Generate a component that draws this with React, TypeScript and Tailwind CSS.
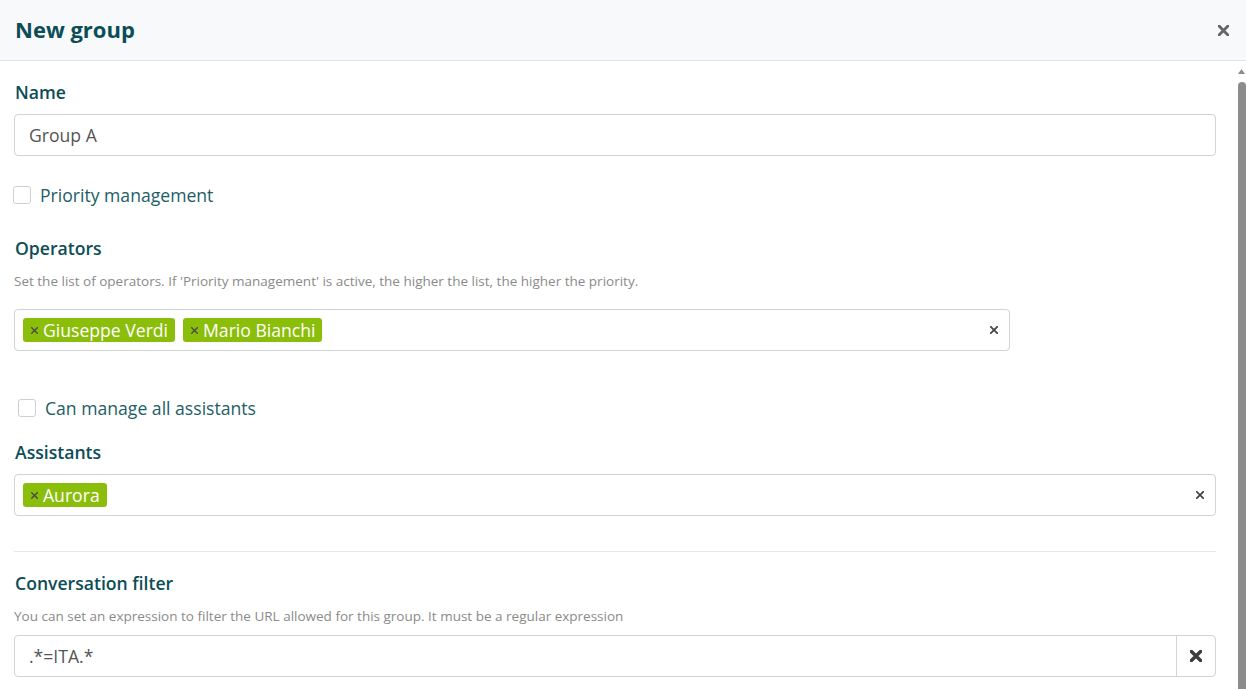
import React from "react";

const X = ({ size = 8, stroke = 2, color = "#555" }: { size?: number; stroke?: number; color?: string }) => (
  <svg width={size} height={size} viewBox="0 0 10 10" className="shrink-0">
    <path d="M1 1 L9 9 M9 1 L1 9" stroke={color} strokeWidth={stroke} strokeLinecap="square" fill="none" />
  </svg>
);

const Tag = ({ label }: { label: string }) => (
  <div className="flex items-center h-[24px] rounded-[3px] bg-[#8bbd0b] pl-[8px] pr-[7px] gap-[5px]">
    <X size={7} stroke={2} color="#4a4a4a" />
    <span className="text-white text-[17.6px] leading-[24px]">{label}</span>
  </div>
);

const Checkbox = ({ label, indent }: { label: string; indent?: boolean }) => (
  <div className={`flex items-center h-[24px] gap-[9px] ${indent ? "pl-[4px]" : "-ml-[1px]"}`}>
    <div className="w-[18px] h-[18px] rounded-[3px] border border-[#ccd1d6] bg-white" />
    <span className="text-[17.6px] text-[#1d5d66]">{label}</span>
  </div>
);

export default function App() {
  return (
    <div className="w-[1246px] h-[689px] overflow-hidden bg-white flex flex-col" style={{ fontFamily: '"Open Sans", sans-serif' }}>
      <div className="h-[61px] shrink-0 bg-[#f7f9fa] border-b border-[#dde3e8] flex items-center justify-between pl-[15px] pr-[17px]">
        <h1 className="text-[22px] font-bold text-[#0c4d56] leading-[30px] -mt-[3px]">New group</h1>
        <X size={11} stroke={2.6} color="#666" />
      </div>
      <div className="flex flex-1 min-h-0">
        <div className="flex-1 pl-[14px] pr-[21px] pt-[19px] flex flex-col">
          <div className="pl-px text-[17.6px] leading-[24px] font-semibold text-[#0c4d56]">Name</div>
          <div className="mt-[10px] h-[42px] border border-[#ced4da] rounded-[4px] flex items-center px-[14px] text-[17.6px] text-[#555]">Group A</div>

          <div className="mt-[27px]"><Checkbox label="Priority management" /></div>

          <div className="mt-[29px] pl-px text-[17.6px] leading-[24px] font-semibold text-[#0c4d56]">Operators</div>
          <div className="mt-[11px] text-[13.5px] leading-[20px] text-[#8a8a8a]">Set the list of operators. If 'Priority management' is active, the higher the list, the higher the priority.</div>
          <div className="mt-[18px] w-[996px] h-[42px] border border-[#ced4da] rounded-[4px] flex items-center pl-[8px] pr-[11px] gap-[8px]">
            <Tag label="Giuseppe Verdi" />
            <Tag label="Mario Bianchi" />
            <div className="flex-1" />
            <X size={8} stroke={2.2} color="#444" />
          </div>

          <div className="mt-[45px]"><Checkbox label="Can manage all assistants" indent /></div>

          <div className="mt-[20px] pl-px text-[17.6px] leading-[24px] font-semibold text-[#0c4d56]">Assistants</div>
          <div className="mt-[10px] h-[42px] border border-[#ced4da] rounded-[4px] flex items-center pl-[8px] pr-[11px] gap-[8px]">
            <Tag label="Aurora" />
            <div className="flex-1" />
            <X size={8} stroke={2.2} color="#444" />
          </div>

          <div className="mt-[35px] h-px bg-[#e4e6e8]" />

          <div className="mt-[19px] pl-px text-[17.6px] leading-[24px] font-semibold text-[#0c4d56]">Conversation filter</div>
          <div className="mt-[11px] text-[13.5px] leading-[20px] text-[#8a8a8a]">You can set an expression to filter the URL allowed for this group. It must be a regular expression</div>
          <div className="mt-[9px] h-[42px] border border-[#ced4da] rounded-[4px] flex">
            <div className="flex-1 flex items-center px-[14px] text-[17.6px] text-[#555]">.*=ITA.*</div>
            <div className="w-[39px] border-l border-[#ced4da] flex items-center justify-center">
              <X size={12} stroke={2.8} color="#3d3d3d" />
            </div>
          </div>
        </div>
        <div className="w-[9px] shrink-0 flex flex-col items-center bg-white">
          <svg width="9" height="12" viewBox="0 0 9 12" className="mt-[3px]">
            <path d="M1 10 L4.5 5 L8 10 Z" fill="#8c8c8c" />
          </svg>
          <div className="mt-[6px] w-[8px] flex-1 rounded-t-[4px] bg-[#8c8c8c]" />
        </div>
      </div>
    </div>
  );
}
